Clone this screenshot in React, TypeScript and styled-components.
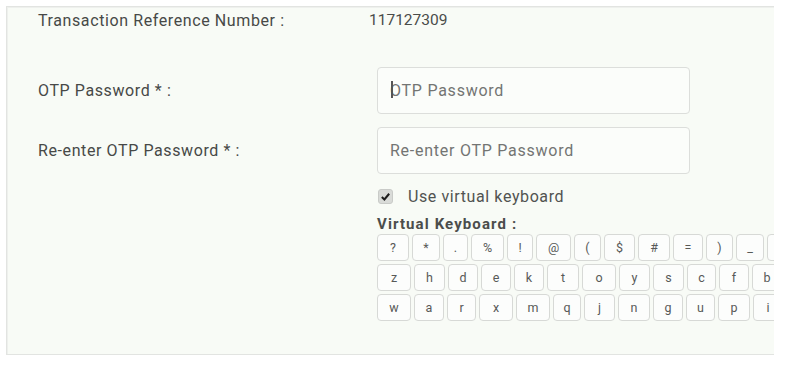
import React from "react";
import styled, { createGlobalStyle } from "styled-components";

const Global = createGlobalStyle`
  html, body { margin: 0; padding: 0; background: #ffffff; }
  body { font-family: Roboto, "Noto Sans", "Liberation Sans", sans-serif; }
  * { box-sizing: border-box; }
`;

const Page = styled.div`
  width: 808px;
  height: 370px;
  padding: 6px 34px 0 6px;
  background: #ffffff;
`;

const Panel = styled.section`
  width: 768px;
  height: 349px;
  background: #f8fbf6;
  border: 1px solid #e2e4e1;
  border-right: none;
  box-shadow: inset 1px 1px 0 #eef0ed;
  overflow: hidden;
  padding: 3px 0 0 31px;
`;

const Row = styled.div<{ $h: number; $mt: number }>`
  display: grid;
  grid-template-columns: 331px 1fr;
  align-items: center;
  height: ${(p) => p.$h}px;
  margin-top: ${(p) => p.$mt}px;
`;

const Label = styled.div`
  font-size: 16px;
  color: #474947;
  letter-spacing: 0.6px;
  white-space: nowrap;
`;

const Value = styled.div`
  font-size: 15.5px;
  color: #4a4c4a;
  white-space: nowrap;
`;

const Field = styled.div`
  position: relative;
  margin-left: 8px;
  width: 313px;
  height: 47px;
`;

const Input = styled.input`
  width: 100%;
  height: 100%;
  border: 1px solid #dcdedb;
  border-radius: 4px;
  background: #fbfdfa;
  padding: 0 0 0 12px;
  font-family: inherit;
  font-size: 16px;
  letter-spacing: 0.75px;
  color: #444;
  outline: none;
  &::placeholder { color: #737573; }
`;

const Caret = styled.span`
  position: absolute;
  left: 14px;
  top: 14px;
  width: 1.5px;
  height: 17px;
  background: #555;
`;

const Side = styled.div`
  padding-left: 331px;
`;

const CheckRow = styled.label`
  display: flex;
  align-items: center;
  gap: 15px;
  height: 28px;
  margin-top: 8px;
  margin-left: 9px;
  font-size: 16px;
  letter-spacing: 0.6px;
  color: #515351;
`;

const Box = styled.span`
  width: 15px;
  height: 15px;
  border-radius: 3px;
  background: #d9dbd8;
  border: 1px solid #c9cbc8;
  display: flex;
  align-items: center;
  justify-content: center;
`;

const KbTitle = styled.div`
  margin-top: 5px;
  margin-left: 8px;
  height: 18px;
  line-height: 18px;
  font-size: 15px;
  font-weight: 700;
  letter-spacing: 1.1px;
  color: #4b4d4b;
`;

const Keyboard = styled.div`
  margin-top: 1px;
  margin-left: 8px;
  display: flex;
  flex-direction: column;
  gap: 3px;
  width: 500px;
`;

const KeyRow = styled.div`
  display: flex;
  gap: 3px;
`;

const Key = styled.button<{ $w: number }>`
  flex: none;
  width: ${(p) => p.$w}px;
  height: 27px;
  border: 1px solid #d7d9d6;
  border-radius: 4px;
  background: #fcfdfc;
  font-family: inherit;
  font-size: 12.5px;
  color: #585a58;
  padding: 0;
  display: flex;
  align-items: center;
  justify-content: center;
`;

const rows: [string, number][][] = [
  [["?", 32], ["*", 28], [".", 25], ["%", 33], ["!", 26], ["@", 35], ["(", 27], ["$", 31], ["#", 32], ["=", 30], [")", 27], ["_", 28], ["", 30]],
  [["z", 34], ["h", 31], ["d", 30], ["e", 30], ["k", 30], ["t", 32], ["o", 34], ["y", 31], ["s", 31], ["c", 29], ["f", 30], ["b", 30]],
  [["w", 34], ["a", 30], ["r", 29], ["x", 34], ["m", 34], ["q", 28], ["j", 31], ["n", 32], ["g", 30], ["u", 29], ["p", 32], ["i", 30]],
];

export default function App() {
  return (
    <>
      <Global />
      <Page>
        <Panel>
          <Row $h={20} $mt={0}>
            <Label>Transaction Reference Number :</Label>
            <Value>117127309</Value>
          </Row>
          <Row $h={47} $mt={37}>
            <Label>OTP Password * :</Label>
            <Field>
              <Input type="password" placeholder="OTP Password" readOnly />
              <Caret />
            </Field>
          </Row>
          <Row $h={47} $mt={13}>
            <Label>Re-enter OTP Password * :</Label>
            <Field>
              <Input type="password" placeholder="Re-enter OTP Password" readOnly />
            </Field>
          </Row>
          <Side>
            <CheckRow>
              <Box>
                <svg width="11" height="11" viewBox="0 0 12 12">
                  <path d="M2 6.5 L4.8 9.2 L10 3" fill="none" stroke="#1d1d1d" strokeWidth="2.2" />
                </svg>
              </Box>
              Use virtual keyboard
            </CheckRow>
            <KbTitle>Virtual Keyboard :</KbTitle>
            <Keyboard>
              {rows.map((r, i) => (
                <KeyRow key={i}>
                  {r.map(([c, w], j) => (
                    <Key key={j} $w={w}>{c}</Key>
                  ))}
                </KeyRow>
              ))}
            </Keyboard>
          </Side>
        </Panel>
      </Page>
    </>
  );
}
